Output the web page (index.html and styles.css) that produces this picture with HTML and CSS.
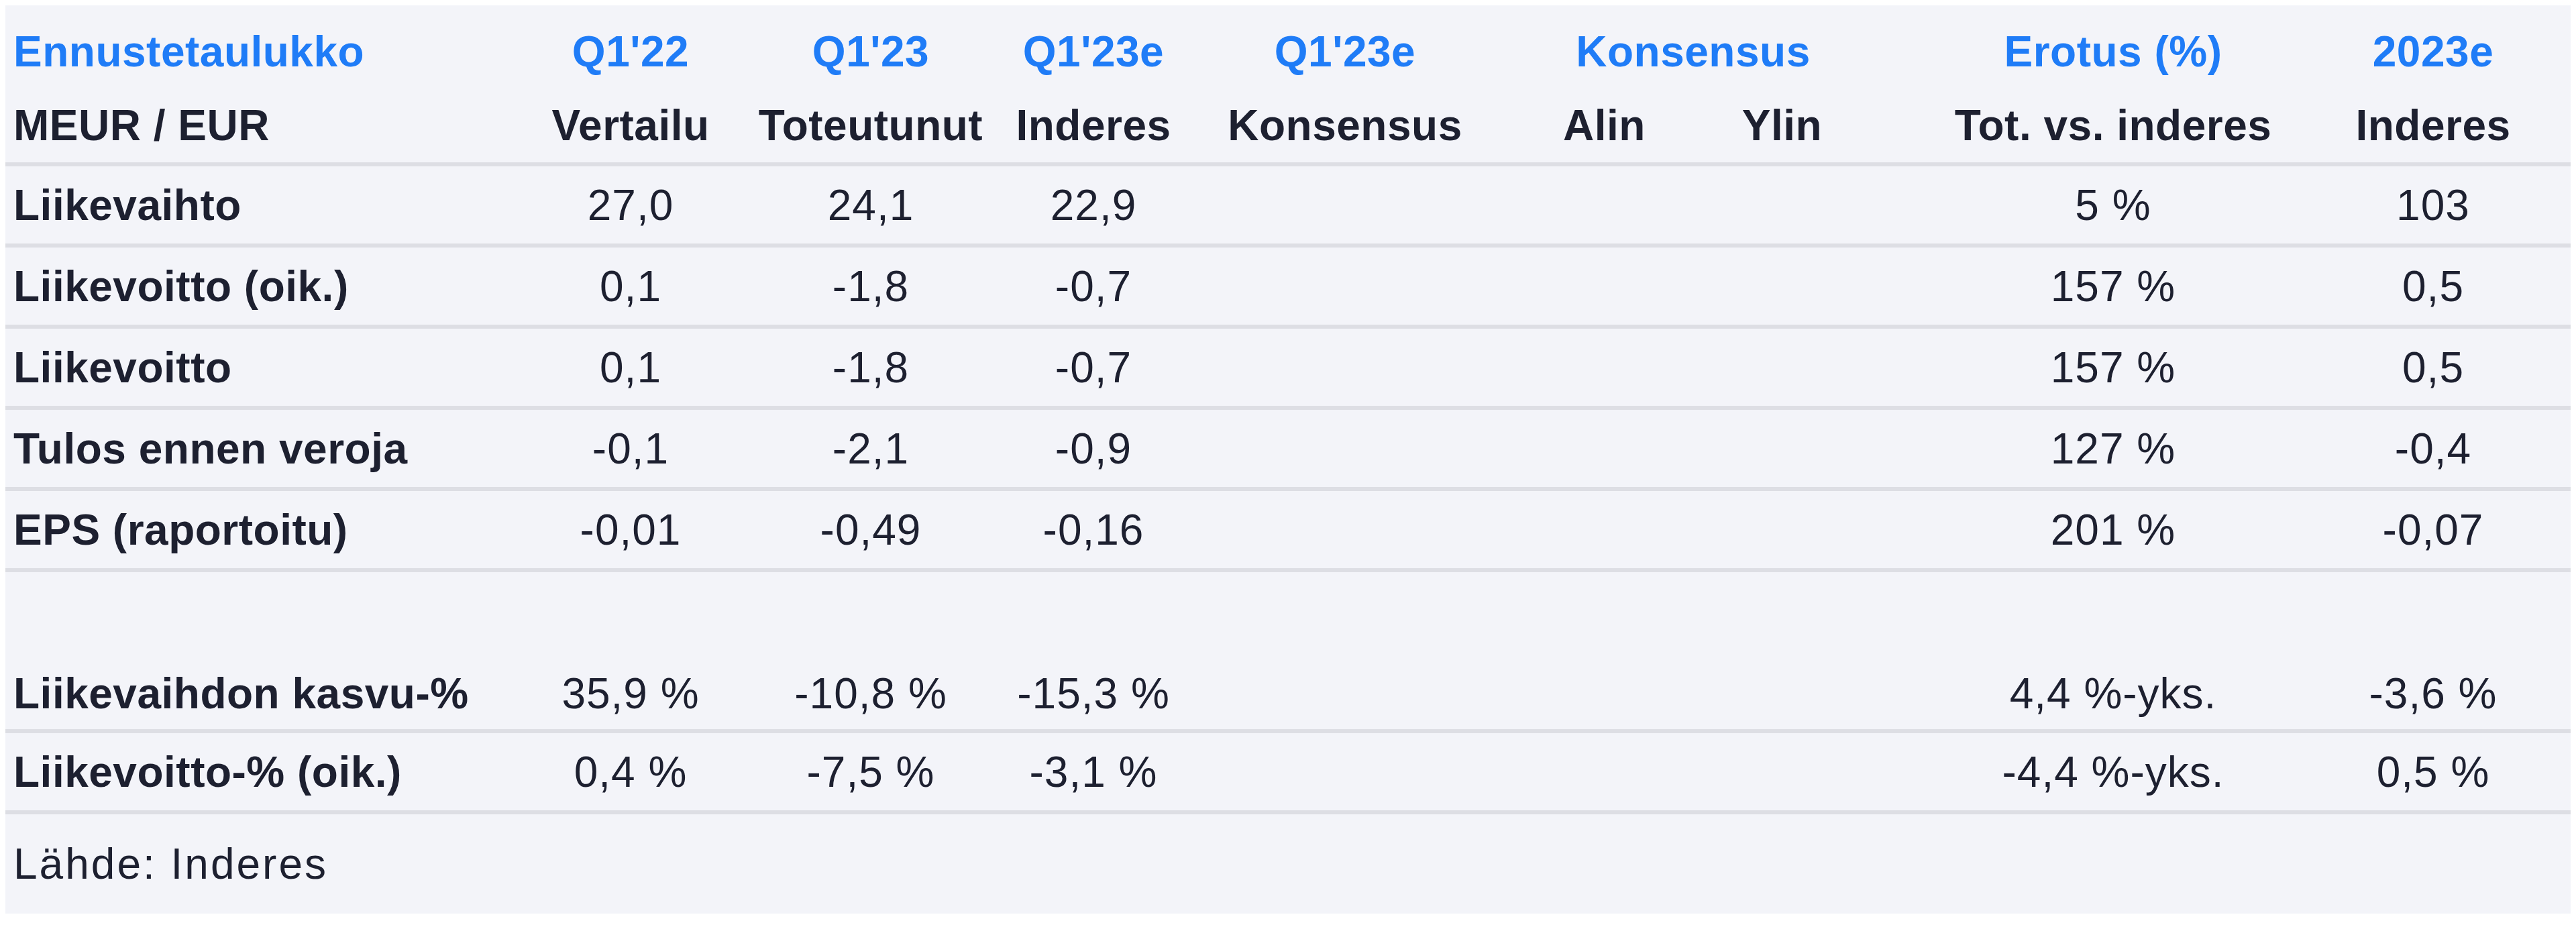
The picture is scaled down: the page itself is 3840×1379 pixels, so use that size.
FILE: index.html
```html
<!DOCTYPE html>
<html lang="fi">
<head>
<meta charset="utf-8">
<title>Ennustetaulukko</title>
<link rel="stylesheet" href="styles.css">
</head>
<body>
<div class="panel">
  <div class="head">
    <div class="row hrow blue">
      <span class="lbl">Ennustetaulukko</span>
      <span class="c">Q1'22</span>
      <span class="c">Q1'23</span>
      <span class="c">Q1'23e</span>
      <span class="c">Q1'23e</span>
      <span class="c span2">Konsensus</span>
      <span class="c">Erotus (%)</span>
      <span class="c">2023e</span>
    </div>
    <div class="row hrow">
      <span class="lbl">MEUR / EUR</span>
      <span class="c">Vertailu</span>
      <span class="c">Toteutunut</span>
      <span class="c">Inderes</span>
      <span class="c">Konsensus</span>
      <span class="c">Alin</span>
      <span class="c">Ylin</span>
      <span class="c">Tot. vs. inderes</span>
      <span class="c">Inderes</span>
    </div>
  </div>
  <div class="body">
    <div class="row drow">
      <span class="lbl">Liikevaihto</span>
      <span class="c">27,0</span><span class="c">24,1</span><span class="c">22,9</span>
      <span class="c"></span><span class="c"></span><span class="c"></span>
      <span class="c">5 %</span><span class="c">103</span>
    </div>
    <div class="row drow">
      <span class="lbl">Liikevoitto (oik.)</span>
      <span class="c">0,1</span><span class="c">-1,8</span><span class="c">-0,7</span>
      <span class="c"></span><span class="c"></span><span class="c"></span>
      <span class="c">157 %</span><span class="c">0,5</span>
    </div>
    <div class="row drow">
      <span class="lbl">Liikevoitto</span>
      <span class="c">0,1</span><span class="c">-1,8</span><span class="c">-0,7</span>
      <span class="c"></span><span class="c"></span><span class="c"></span>
      <span class="c">157 %</span><span class="c">0,5</span>
    </div>
    <div class="row drow">
      <span class="lbl">Tulos ennen veroja</span>
      <span class="c">-0,1</span><span class="c">-2,1</span><span class="c">-0,9</span>
      <span class="c"></span><span class="c"></span><span class="c"></span>
      <span class="c">127 %</span><span class="c">-0,4</span>
    </div>
    <div class="row drow">
      <span class="lbl">EPS (raportoitu)</span>
      <span class="c">-0,01</span><span class="c">-0,49</span><span class="c">-0,16</span>
      <span class="c"></span><span class="c"></span><span class="c"></span>
      <span class="c">201 %</span><span class="c">-0,07</span>
    </div>
    <div class="blank"></div>
    <div class="row drow grow">
      <span class="lbl">Liikevaihdon kasvu-%</span>
      <span class="c">35,9 %</span><span class="c">-10,8 %</span><span class="c">-15,3 %</span>
      <span class="c"></span><span class="c"></span><span class="c"></span>
      <span class="c">4,4 %-yks.</span><span class="c">-3,6 %</span>
    </div>
    <div class="row drow">
      <span class="lbl">Liikevoitto-% (oik.)</span>
      <span class="c">0,4 %</span><span class="c">-7,5 %</span><span class="c">-3,1 %</span>
      <span class="c"></span><span class="c"></span><span class="c"></span>
      <span class="c">-4,4 %-yks.</span><span class="c">0,5 %</span>
    </div>
  </div>
  <div class="foot">Lähde: Inderes</div>
</div>
</body>
</html>
```
FILE: styles.css
```css
html, body {
  background: #ffffff;
}
body {
  margin: 8px;
}
.panel {
  background: #f3f4f9;
  color: #1d2030;
  font-family: "Liberation Sans", Arial, sans-serif;
  font-size: 64px;
  height: 1354px;
  box-sizing: border-box;
}
.row {
  display: grid;
  grid-template-columns: 785px 294px 422px 242px 508px 265px 265px 722px 232px;
  align-items: center;
}
.c {
  justify-self: center;
  white-space: nowrap;
  letter-spacing: 1px;
}
.lbl {
  justify-self: start;
  padding-left: 12px;
  font-weight: bold;
  white-space: nowrap;
  letter-spacing: 0.5px;
}
.span2 {
  grid-column: span 2;
}
.head {
  padding-top: 14px;
  border-bottom: 6px solid #dddee4;
}
.hrow {
  height: 110px;
  font-weight: bold;
}
.hrow .c {
  font-weight: bold;
  letter-spacing: 0.5px;
}
.blue {
  color: #1f7cf7;
}
.drow {
  height: 121px;
  box-sizing: border-box;
  border-bottom: 6px solid #dddee4;
}
.blank {
  height: 119px;
}
.grow {
  padding-top: 8px;
}
.foot {
  height: 148px;
  display: flex;
  align-items: center;
  padding-left: 12px;
  letter-spacing: 3px;
}
```
